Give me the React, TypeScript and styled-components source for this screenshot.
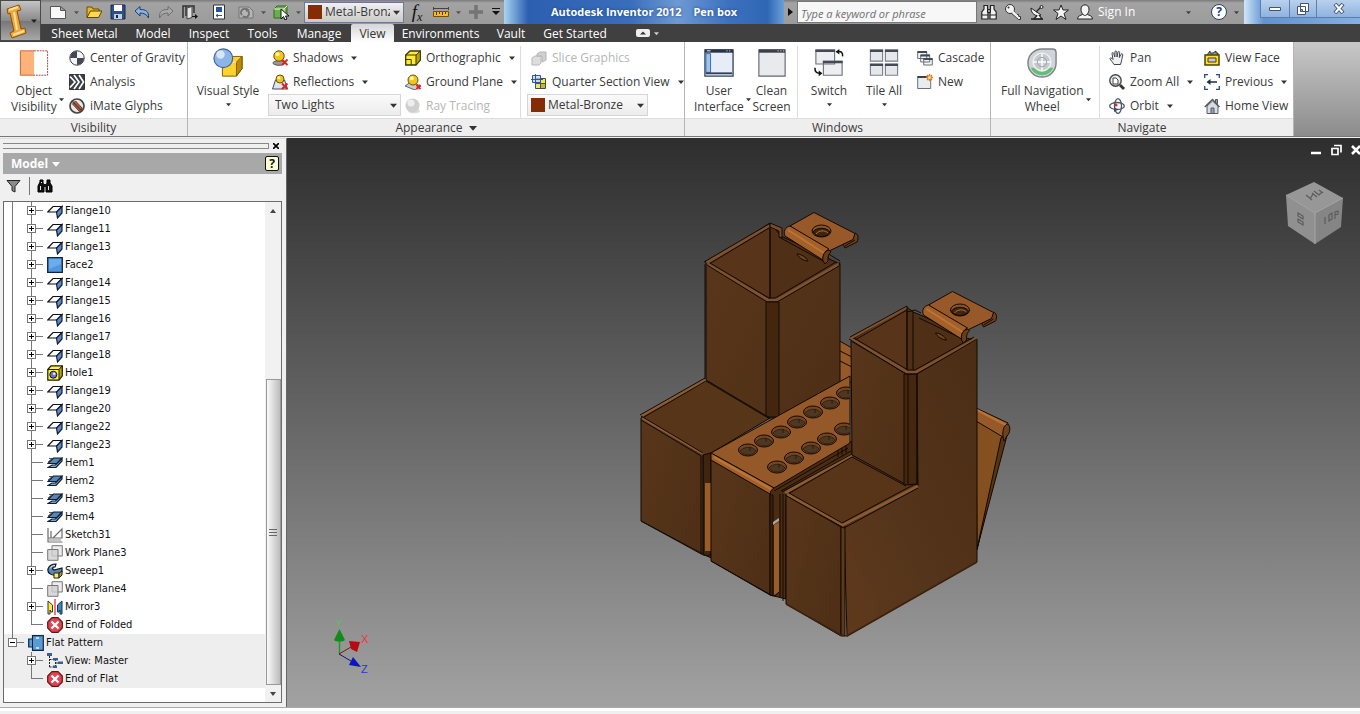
import React from "react";
import styled, { createGlobalStyle, css } from "styled-components";

const ui = `"Open Sans", "Noto Sans", sans-serif`;
const treeFont = `"DejaVu Sans Condensed", "Noto Sans", sans-serif`;

const GlobalStyle = createGlobalStyle`
  * { box-sizing: border-box; }
  body { margin: 0; background: #f0f0f0; }
  button, select, input { font: inherit; color: inherit; border: 0; padding: 0; margin: 0; background: none; }
  svg { display: block; flex: none; }
`;

const Page = styled.div`
  display: flex;
  flex-direction: column;
  min-height: 100vh;
  font-family: ${ui};
  font-size: 12px;
  line-height: 16px;
  color: #3a3a3a;
  overflow: hidden;
`;

/* ---------- icons ---------- */

const glyphs: Record<string, React.ReactNode> = {
  page: <path d="M.5 2.500h10l5 4v8H.5z M10.500 2.500v4h5" fill="#f8f8f8" stroke="#555" />,
  folder: (
    <>
      <path d="M1 13V3h5l1 2h6v3" fill="#e8b820" stroke="#6a4a00" />
      <path d="M1 13.500 4.500 7H16l-3.500 6.500z" fill="#ffd94a" stroke="#5d4300" />
    </>
  ),
  save: (
    <>
      <path d="M1 1h14v14H1z" fill="#2d4f8f" stroke="#14284d" />
      <path d="M4 1h8v6H4z" fill="#fff" />
      <path d="M4 10h8v5H4z" fill="#c3cde0" />
      <path d="M6 11h2v3H6z" fill="#14284d" />
    </>
  ),
  undo: <path d="M1 7 6 2.500v3c6 0 9 2 8.500 8.500C13 10.500 10 9 6 9v3z" fill="#8db4e2" stroke="#1f3f70" />,
  redo: <path d="M15 7 10 2.500v3C4 5.500 1 7.500 1.500 14 3 10.500 6 9 10 9v3z" fill="#a9a9a9" stroke="#6e6e6e" />,
  exit: (
    <>
      <path d="M1 14V2h11v7M4 2v10" fill="none" stroke="#333" strokeWidth="1.500" />
      <path d="M5 4l5-1.500v11L5 15z" fill="#e4e4e4" stroke="#444" />
      <path d="M10 12.500h4" stroke="#111" />
      <path d="M13 10l3 2.500-3 2.500z" fill="#111" />
    </>
  ),
  doc: (
    <>
      <path d="M2.500 1h11v14h-11z" fill="#fff" stroke="#333" />
      <path d="M5 3h6v5H5z" fill="#25569c" />
      <path d="M5 11.500h6M5 11.500l2-1.500M5 11.500l2 1.500" stroke="#25569c" fill="none" />
    </>
  ),
  sync: (
    <>
      <path d="M1 3h10l4 4v7H1z" fill="#b5b5b5" stroke="#767676" />
      <path d="M4 11a3.500 3.500 0 0 1 5-5M10 7a3.500 3.500 0 0 1-5 5" fill="none" stroke="#707070" strokeWidth="1.800" />
      <path d="M8 3.500l4 2.500-4 2z" fill="#707070" />
    </>
  ),
  pick: (
    <>
      <path d="M1 5l3-3h10v9l-3 3H1z" fill="#67b04a" stroke="#2e6b1d" />
      <path d="M1 5h10v9M11 5l3-3" fill="none" stroke="#e6f7df" />
      <path d="M8 5v10l2.500-2.500L12 16l2-1-1.500-3H16z" fill="#fff" stroke="#111" />
    </>
  ),
  ruler: (
    <>
      <path d="M.5 7.500h15v5H.5z" fill="#f4b92c" stroke="#7a4d00" />
      <path d="M3.500 8v3M6.500 8v2M9.500 8v3M12.500 8v2" stroke="#5b3900" />
      <path d="M0 4.500h16M.5 3v3M15.500 3v3" stroke="#444" />
    </>
  ),
  plus: <path d="M8 1v14M1 8h14" stroke="#747474" strokeWidth="3.500" />,
  binoc: (
    <>
      <path d="M3 1.500h3.500V5l.5 2v8H.8V8L3 5zM9.500 1.500H13V5l2.200 3v7H9V7l.5-2z" fill="#f2f2f2" stroke="#222" strokeWidth="1.200" />
      <path d="M6.500 5.500h3v3h-3z" fill="#999" stroke="#222" />
      <path d="M1 11h6M9 11h6" stroke="#222" />
    </>
  ),
  binocDark: (
    <>
      <path d="M3 2h3v3l1 2v7H1V8l2-4zM10 2h3v3l2 3v6H9V7l1-2z" fill="#111" stroke="#000" />
      <path d="M6.500 6h3v3h-3z" fill="#111" />
      <path d="M3.500 8v4M11.500 8v4M4.500 4v1" stroke="#e8e8e8" />
    </>
  ),
  key: (
    <>
      <path d="M5 8l8.500 7.500H15.500v-3h-2v-2h-2L8 6z" fill="#f2f2f2" stroke="#333" />
      <circle cx="5" cy="5" r="4.500" fill="#f2f2f2" stroke="#333" />
      <path d="M6 6l7 7" stroke="#f2f2f2" strokeWidth="2" />
      <circle cx="3.500" cy="3.500" r="1" fill="#333" />
    </>
  ),
  dish: (
    <>
      <path d="M2 4c0 6 5 9 10 7L2 4z" fill="#f4f4f4" stroke="#222" />
      <path d="M7 8l6-6M8 11.500L5 15h8l-3-4" fill="#f4f4f4" stroke="#222" strokeWidth="1.200" />
      <path d="M2 15h12" stroke="#222" strokeWidth="1.500" />
      <circle cx="12.500" cy="3" r="1.500" fill="#eee" stroke="#222" />
    </>
  ),
  star: <path d="M8 1l2 5h5.500L11 9.500l2 6L8 12l-5 3.500 2-6L.5 6H6z" fill="#f4f4f4" stroke="#222" />,
  user: (
    <>
      <path d="M.5 15c0-3 3-3.500 5-4.500h5c2 1 5 1.500 5 4.500z" fill="#f4f4f4" stroke="#222" />
      <path d="M4 5c0-5.500 8-5.500 8 0 0 4-2.500 6.500-4 6.500S4 9 4 5z" fill="#f4f4f4" stroke="#222" />
    </>
  ),
  gravity: (
    <>
      <circle cx="8" cy="8" r="7.200" fill="#f4f4f4" stroke="#444" />
      <path d="M8 8V1A7 7 0 0 0 1 8zM8 8v7a7 7 0 0 0 7-7z" fill="#444a55" />
    </>
  ),
  analysis: (
    <>
      <path d="M.5.500h15v15H.5z" fill="#3b3f46" stroke="#333" />
      <path d="M1 2.500l5 5.500-5 5.500M5 1l5 7-5 7M10 1l4.500 7L10 15" fill="none" stroke="#fff" strokeWidth="1.700" />
    </>
  ),
  imate: (
    <>
      <circle cx="8" cy="8" r="7" fill="#e8e8e8" stroke="#444" strokeWidth="1.700" />
      <path d="M3.500 6l3-3 6.500 7-.5 3.500-2.500-.5z" fill="#c2603f" stroke="#7a2c14" />
      <path d="M3 3l10 10" stroke="#444" strokeWidth="1.200" />
    </>
  ),
  shadows: (
    <>
      <ellipse cx="7" cy="13" rx="6" ry="2.300" fill="#999" stroke="#555" />
      <circle cx="7" cy="6" r="5.200" fill="#f2c51c" stroke="#6d5300" />
      <circle cx="5.500" cy="4.300" r="2" fill="#fff6b0" />
      <path d="M10 9.500l5.500 5.500M15.500 9.500L10 15" stroke="#d22" strokeWidth="1.900" />
    </>
  ),
  reflections: (
    <>
      <path d="M3.500 6h9l3 9H.5z" fill="#dfe3ea" stroke="#444b57" />
      <circle cx="8" cy="5" r="4" fill="#f2c51c" stroke="#6d5300" />
      <circle cx="6.800" cy="3.700" r="1.500" fill="#fff6b0" />
      <path d="M10 9.500l5.500 5.500M15.500 9.500L10 15" stroke="#d22" strokeWidth="1.900" />
    </>
  ),
  ortho: (
    <>
      <path d="M.7 5 5 1h10.300v9L11 15H.7z" fill="#ffe93a" stroke="#3d3700" strokeWidth="1.300" />
      <path d="M11 15V5l4.300-4v9z" fill="#b9a400" stroke="#3d3700" />
      <path d="M.7 5H11M.7 9.500h5.500V15" fill="none" stroke="#3d3700" />
    </>
  ),
  ground: (
    <>
      <path d="M0 12l6-4 10 4-6 4z" fill="#c9cdd4" stroke="#666" />
      <circle cx="8" cy="6" r="5" fill="#f2c51c" stroke="#6d5300" />
      <circle cx="6.800" cy="4.300" r="2" fill="#fff6b0" />
      <path d="M11.500 11l4 4M15.500 11l-4 4" stroke="#d22" strokeWidth="1.900" />
    </>
  ),
  ray: (
    <>
      <ellipse cx="9" cy="13" rx="6" ry="2.300" fill="#ddd" />
      <circle cx="7.500" cy="7.500" r="7" fill="#cfcfcf" />
      <circle cx="6" cy="5" r="3.500" fill="#eee" />
    </>
  ),
  slice: (
    <>
      <path d="M1 8l3-2h6v7l-2 2H1z" fill="#ddd" stroke="#b8b8b8" />
      <path d="M6 4l3-2h6v8l-4 2V6H6z" fill="#d0d0d0" stroke="#b3b3b3" />
    </>
  ),
  quarter: (
    <>
      <path d="M4.500 4.500h10v10h-10z" fill="#ffe452" stroke="#4a4a4a" />
      <path d="M1.500 1.500h8v7h-8z" fill="#bcd4f5" fillOpacity="0.700" stroke="#2456b8" />
      <path d="M4.500 0v13M0 5.500h12M9.500 2v12M4 9.500h11" fill="none" stroke="#2456b8" />
      <path d="M10 10h4v4h-4z" fill="#cbb62a" />
    </>
  ),
  cascade: (
    <>
      <path d="M.7 1.500h9v7h-9zM3.700 5h9v7h-9zM6.700 8.500h8.600v6.500H6.700z" fill="#f2f4f7" stroke="#6b707a" />
      <path d="M.5 2h9.500M3.500 5.500H13M6.500 9h9" stroke="#444a54" strokeWidth="1.800" />
    </>
  ),
  newWin: (
    <>
      <path d="M.7 2.500h13v12H.7z" fill="#e9ecf0" stroke="#6b707a" />
      <path d="M.5 3h9" stroke="#3c424c" strokeWidth="2" />
      <path d="M12.500 0v7M9 3.500h7M10 1l5 5M15 1l-5 5" stroke="#f07416" strokeWidth="1.300" />
      <circle cx="12.500" cy="3.500" r="1.500" fill="#ffe9a0" />
    </>
  ),
  pan: (
    <path
      d="M5 14.500C3.500 12 2 10.500.8 8.500c.7-1 2-.5 3.200 1L3 3.500c0-1.200 1.500-1.200 1.800 0L5.800 7 6 1.800c.1-1.200 1.700-1.200 1.800 0L8 7l1-4.800c.3-1.100 1.700-.9 1.700.3L10.300 7.500l1.800-3.300c.6-1 1.900-.4 1.600.8-.6 2.500-1 6-2.200 9.500z"
      fill="#f1f1f1" stroke="#3f444d"
    />
  ),
  zoom: (
    <>
      <circle cx="6.500" cy="6.500" r="5.700" fill="#e9edf2" stroke="#444" strokeWidth="1.400" />
      <path d="M4 4h3l2 2v4H4z" fill="#fff" stroke="#444" />
      <path d="M11 11l4 4" stroke="#333" strokeWidth="2.800" />
    </>
  ),
  orbit: (
    <>
      <ellipse cx="8" cy="8" rx="7.300" ry="3.500" fill="none" stroke="#4d5766" strokeWidth="1.300" />
      <ellipse cx="9" cy="8" rx="3.500" ry="7.300" fill="none" stroke="#4d5766" strokeWidth="1.300" />
      <path d="M7 5.500v3M5.500 7h3" stroke="#c22" strokeWidth="1.300" />
      <path d="M5 9l4 2.500L5 14z" fill="#444c5a" />
    </>
  ),
  face: (
    <>
      <path d="M3 5l3-4v2h3l3-2v2h2v3" fill="#8f97a3" stroke="#333" />
      <path d="M1 5h14v10H1z" fill="#ffe12c" stroke="#4d4300" strokeWidth="1.500" />
      <path d="M4 8h8v4H4z" fill="#c9c5ea" stroke="#4d4300" />
    </>
  ),
  previous: (
    <>
      <path d="M.7 4V.7H4M12 .7h3.300V4M15.300 12v3.300H12M4 15.300H.7V12" fill="none" stroke="#2b4a7c" strokeWidth="1.300" />
      <path d="M4 8h9" stroke="#1c2b44" strokeWidth="1.500" />
      <path d="M2.500 8l4-3v6z" fill="#1c2b44" />
    </>
  ),
  home: (
    <>
      <path d="M11.500 1.500h2v4h-2z" fill="#999" stroke="#555" />
      <path d="M3 8l5.500-5L14 8v7.500H3z" fill="#d9dbe3" stroke="#555b66" />
      <path d="M.7 9 8.500 1.500 15.500 9" fill="none" stroke="#555b66" strokeWidth="1.500" />
      <path d="M7 10h3v5.500H7z" fill="#9aa0ad" stroke="#555b66" />
    </>
  ),
  flange: (
    <>
      <path d="M.8 9 6 3.500h9L10 9z" fill="#fff" stroke="#111" strokeWidth="1.200" />
      <path d="M9.500 9 15 3.500V10l-4.500 5z" fill="#5b8ac6" stroke="#111c33" strokeWidth="1.200" />
    </>
  ),
  faceSq: (
    <>
      <path d="M.7.700h14.600v14.600H.7z" fill="#4f97df" stroke="#0f2340" strokeWidth="1.300" />
      <path d="M2 2h12v5L2 12z" fill="#6badeb" />
    </>
  ),
  hole: (
    <>
      <path d="M.8 4.500 4 .8h11.200v10L12 15.200H.8z" fill="#ffef4a" stroke="#1c1a00" strokeWidth="1.200" />
      <path d="M12 15V4.500L15.200.8v10z" fill="#b7a500" stroke="#1c1a00" />
      <path d="M.8 4.500H12" stroke="#1c1a00" />
      <circle cx="6.300" cy="9.700" r="3.500" fill="#6f76c9" stroke="#111" />
      <circle cx="7.200" cy="8.800" r="1.300" fill="#e6e8ff" />
    </>
  ),
  hem: (
    <>
      <path d="M1 8.500 6.500 3H15l-5 5.500z" fill="#5787b4" stroke="#0d1d33" strokeWidth="1.200" />
      <path d="M2 3.500h4M1 7l4-3.500" stroke="#333" strokeWidth="0.800" />
      <path d="M1 12.500 5 10h3.500l6.500-6.500V6l-6 6.500z" fill="#7fa9d0" stroke="#0d1d33" strokeWidth="1.200" />
    </>
  ),
  sketch: (
    <>
      <path d="M1 1v14h14.500M1 11h14V2L6 11M4 4v7" fill="none" stroke="#6b6b6b" strokeWidth="1.200" />
      <path d="M2 12h12v2.500H2z" fill="#c5c5c5" />
    </>
  ),
  plane: (
    <>
      <path d="M5 .7h10.300V11H5z" fill="#ececec" stroke="#777" />
      <path d="M.7 4.500H11v10.800H.7z" fill="#cfcfcf" fillOpacity="0.800" stroke="#777" />
    </>
  ),
  sweep: (
    <>
      <path d="M1 6c1-3 4-5 8-5l-1 3c-3 0-3 2-1 3l8-2v4l-6 3C5 13 0 10 1 6z" fill="#5d87b0" stroke="#0c1524" strokeWidth="1.200" />
      <path d="M3 5.500c1-2 3-3 5-3" fill="none" stroke="#e8f1fa" />
      <path d="M7 10h5v5H7z" fill="#fff05a" stroke="#222" />
      <path d="M12 10l3-2v4l-3 3z" fill="#ac9c20" stroke="#222" />
    </>
  ),
  mirror: (
    <>
      <path d="M1 2l4.500 4v7H4L3 11v4H1z" fill="#ffe93a" stroke="#333" />
      <path d="M15 2l-4.500 4v7H12l1-2v4h2z" fill="#3f86bd" stroke="#13304a" />
      <path d="M8 0v16" stroke="#d22" strokeWidth="1.200" />
    </>
  ),
  end: (
    <>
      <path d="M5 .7h6L15.300 5v6L11 15.300H5L.7 11V5z" fill="#e0444e" stroke="#6d0f16" strokeWidth="1.200" />
      <path d="M4.500 4.500l7 7M11.500 4.500l-7 7" stroke="#fff" strokeWidth="2.300" />
    </>
  ),
  flat: (
    <>
      <path d="M4.500.7H15.300v14.600H4.500V12H.7V4h3.800z" fill="#5b9bd3" stroke="#0d2748" strokeWidth="1.200" />
      <path d="M4.500 4v8" stroke="#0d2748" />
      <path d="M8 3h3M8 13h3" stroke="#e5f2ff" strokeWidth="1.400" />
    </>
  ),
  views: (
    <>
      <path d="M2.500 3v11M2.500 14H6M2.500 6.500H6M8.500 6v8M9 10h3" fill="none" stroke="#222" strokeDasharray="2 1" />
      <path d="M0 0h5v3H0zM6 5h5v2.500H6zM11 8.500h5V11h-5zM6 12.500h4V15H6z" fill="#345f9f" />
    </>
  ),
  filter: <path d="M1 2.500h13L9 8.500V14l-3-1.500v-4z" fill="#8a8a8a" stroke="#222" />,
};

const Icon = ({ name, size = 16 }: { name: string; size?: number }) => (
  <svg width={size} height={size} viewBox="0 0 16 16" aria-hidden="true">{glyphs[name]}</svg>
);

const largeGlyphs: Record<string, React.ReactNode> = {
  objVis: (
    <>
      <path d="M1 3h15v26H1z" fill="#ffb27a" />
      <path d="M16 3h14.500v26H16" fill="#fff" stroke="#9a3d2a" strokeDasharray="2 1" />
      <path d="M16 3H1.500v26H16" fill="none" stroke="#c7652f" />
    </>
  ),
  visual: (
    <>
      <path d="M10 15l6-6h15v13l-6 8H10z" fill="#ffd22e" stroke="#7a5a00" />
      <path d="M25 30V15l6-6v13z" fill="#b98a00" stroke="#7a5a00" />
      <path d="M10 15h15" stroke="#fff3a8" />
      <circle cx="11" cy="11" r="10" fill="#8db6e8" stroke="#44638f" strokeWidth="1.300" />
      <circle cx="8" cy="7" r="4.500" fill="#d6e7fb" />
    </>
  ),
  userUi: (
    <>
      <path d="M1 2h30v28H1z" fill="#e6edf6" stroke="#31415c" strokeWidth="1.400" />
      <path d="M1 1.500h30V5H1z" fill="#26334a" />
      <path d="M2 6h5v20H2z" fill="#9cc4ef" stroke="#3a669c" />
      <path d="M2 27h28" stroke="#31415c" strokeWidth="2" />
      <path d="M3 3h4M24 3h1M27 3h1" stroke="#fff" />
    </>
  ),
  clean: (
    <>
      <path d="M2 2h28v28H2z" fill="#e8eaee" stroke="#60656f" strokeWidth="1.200" />
      <path d="M2 1.500h28V5H2z" fill="#3a3f4a" />
      <path d="M22 3h1M25 3h1M28 3h1" stroke="#fff" />
    </>
  ),
  switch: (
    <>
      <path d="M2 2h20v15H2zM10 14h20v15H10z" fill="#eceef2" stroke="#6b707a" strokeWidth="1.200" />
      <path d="M1.500 3h21M9.500 15h21" stroke="#444a54" strokeWidth="2.500" />
      <path d="M25 4c4-1 6 1 5.500 5M6 27c-4 0-5-2-5-6" fill="none" stroke="#111" strokeWidth="1.600" />
      <path d="M27 1v6l-4-3zM5 24v6l4-3z" fill="#111" />
    </>
  ),
  tile: (
    <>
      <path d="M1.500 2h13v12h-13zM17.500 2h13v12h-13zM1.500 17h13v12h-13zM17.500 17h13v12h-13z" fill="#e4e7ec" stroke="#7b8089" strokeWidth="1.200" />
      <path d="M1 3h14M17 3h14M1 18h14M17 18h14" stroke="#444a54" strokeWidth="2.500" />
    </>
  ),
  wheel: (
    <>
      <path d="M16 1h11c3 0 4 1 4 4v11a15 15 0 1 1-15-15z" fill="#d0d3d7" stroke="#7b8087" strokeWidth="1.500" />
      <path d="M4 21a13 13 0 0 0 24 0z" fill="#5fbf73" />
      <circle cx="16" cy="15" r="9.500" fill="#c6c9ce" stroke="#f1f1f1" strokeWidth="1.500" />
      <path d="M16 6v18M7 15h18" stroke="#fff" strokeWidth="1.500" />
      <circle cx="16" cy="15" r="5" fill="none" stroke="#9ba0a8" />
    </>
  ),
};

const Caret = ({ size = 6, color = "#333" }: { size?: number; color?: string }) => (
  <svg width={size} height={size} viewBox="0 0 6 6" aria-hidden="true"><path d="M0 1.500h6L3 5z" fill={color} /></svg>
);

/* ---------- title bar and tabs ---------- */

const Header = styled.header`
  display: grid;
  grid-template: 24px 18px / 41px 1fr;
  background: #404040;
`;

const AppButton = styled.button`
  grid-row: 1 / 3;
  display: flex;
  align-items: center;
  justify-content: flex-end;
  gap: 1px;
  padding-right: 3px;
  margin: 0 0 1px;
  border: 1px solid #4a4a4a;
  background: linear-gradient(#c4c4c4, #8a8a8a 50%, #777 52%, #a8a8a8);
`;

const TitleBar = styled.div`
  display: flex;
  background: linear-gradient(#7b7b7b, #a3a3a3 3px, #9b9b9b);
`;

const QuickBar = styled.div`
  display: flex;
  align-items: center;
  padding-left: 5px;
`;

const ToolButton = styled.button<{ $w: number }>`
  width: ${(p) => p.$w}px;
  height: 24px;
  display: flex;
  align-items: center;
  justify-content: center;
`;

const Formula = styled.span`
  font: italic 400 19px/20px "Liberation Serif", serif;
  color: #111;
  sub { font-size: 12px; vertical-align: -3px; line-height: 1; }
`;

const Picker = styled.label<{ $w: number; $top?: boolean; $plain?: boolean }>`
  width: ${(p) => p.$w}px;
  height: ${(p) => (p.$top ? 21 : 22)}px;
  display: flex;
  align-items: center;
  gap: 3px;
  padding: 0 3px 0 ${(p) => (p.$plain ? 6 : 3)}px;
  border: 1px solid ${(p) => (p.$top ? "#6b7a90" : "#d5d5d5")};
  background: ${(p) => (p.$top ? "linear-gradient(#f0f0f0, #c9c9c9)" : "linear-gradient(#fafafa, #ececec)")};
  select {
    appearance: none;
    flex: 1;
    min-width: 0;
    height: 18px;
    overflow: hidden;
    text-overflow: clip;
    outline: 0;
  }
`;

const Swatch = styled.span`
  width: 14px;
  height: 14px;
  flex: none;
  background: #842c04;
`;

const TitleText = styled.h1`
  width: 280px;
  margin: 0;
  display: flex;
  justify-content: center;
  gap: 12px;
  font-size: 11px;
  line-height: 24px;
  font-weight: 700;
  color: #fff;
  background: linear-gradient(90deg, #a8d4f4, #2c5fb0 24px, #3a6dbb 45%, #6d9ad4 62%, #3d71bf 80%, #2f66b4 94%, #6b9fd8);
  text-shadow: 0 0 3px #1d3f7c;
`;

const Search = styled.input`
  width: 180px;
  height: 22px;
  margin-top: 1px;
  padding: 2px 3px 0;
  align-self: flex-start;
  border: 1px solid #777;
  background: #f7f7f7;
  font-style: italic;
  font-size: 11px;
  &::placeholder { color: #6f6f6f; opacity: 1; }
`;

const Account = styled.div`
  flex: 1;
  display: flex;
  align-items: center;
`;

const SignIn = styled.button`
  display: flex;
  align-items: center;
  justify-content: space-between;
  width: 94px;
  padding-left: 1px;
  margin-right: 16px;
  color: #fff;
  text-align: left;
`;

const HelpMark = styled.span`
  width: 16px;
  height: 16px;
  border-radius: 50%;
  border: 1px solid #2c3e66;
  background: #fff;
  font-weight: 700;
  line-height: 14px;
  text-align: center;
  color: #1c3f86;
`;

const WindowButtons = styled.div`
  display: flex;
  justify-content: flex-end;
  width: 116px;
  background: linear-gradient(90deg, #cfe6f9, #5f93d2 20px, #86b0e2);
`;

const WindowButton = styled.button<{ $w: number }>`
  width: ${(p) => p.$w}px;
  height: 18px;
  display: flex;
  align-items: center;
  justify-content: center;
  border: solid #5e7fae;
  border-width: 0 0 1px 1px;
  background: linear-gradient(#b9d1ee, #8fb2de);
`;

const Tabs = styled.nav`
  display: flex;
  padding-left: 2px;
  color: #fff;
  font-weight: 500;
`;

const Tab = styled.button<{ $w: number; $active?: boolean }>`
  width: ${(p) => p.$w}px;
  height: 18px;
  padding-top: 1px;
  text-align: center;
  white-space: nowrap;
  ${(p) => p.$active && css`
    color: #333;
    background: linear-gradient(#d5d5d5, #fff);
    border-radius: 2px 2px 0 0;
  `}
`;

const RibbonToggle = styled.button`
  display: flex;
  align-items: center;
  gap: 4px;
  margin-left: 21px;
`;

/* ---------- ribbon ---------- */

const Ribbon = styled.div`
  display: flex;
  height: 95px;
  background: linear-gradient(#c8c8c8, #8c8c8c);
  border-bottom: 1px solid #777;
`;

const Panel = styled.section`
  display: flex;
  flex-direction: column;
  background: #fff;
  border-right: 1px solid #b5b5b5;
`;

const PanelBody = styled.div`
  display: flex;
  flex: 1;
  padding-top: 4px;
`;

const PanelTitle = styled.h2`
  display: flex;
  align-items: center;
  justify-content: center;
  gap: 6px;
  margin: 0;
  height: 18px;
  font-size: 12px;
  font-weight: 400;
  border-top: 1px solid #ddd;
  background: #eee;
`;

const Column = styled.div<{ $w: number; $inset?: number }>`
  width: ${(p) => p.$w}px;
  flex: none;
  display: flex;
  flex-direction: column;
  align-items: flex-start;
  padding-left: ${(p) => p.$inset ?? 0}px;
  ${Picker} { margin-left: -${(p) => p.$inset ?? 0}px; }
`;

const Rule = styled.span<{ $gap: number }>`
  width: 1px;
  flex: none;
  margin-right: ${(p) => p.$gap}px;
  background: #ddd;
`;

const SmallButton = styled.button`
  display: flex;
  align-items: center;
  gap: 5px;
  height: 24px;
  white-space: nowrap;
  &:disabled { color: #b5b5b5; }
  svg + span + svg { margin-left: 3px; }
`;

const LargeButton = styled.button<{ $w: number; $side?: boolean }>`
  width: ${(p) => p.$w}px;
  flex: none;
  display: grid;
  grid-template-columns: ${(p) => (p.$side ? "1fr 10px" : "1fr")};
  grid-template-rows: 34px auto auto;
  align-content: start;
  justify-items: center;
  align-items: center;
  white-space: pre;
  row-gap: 3px;
  > svg:first-child { grid-column: 1; }
  > span { grid-column: 1; }
  > svg:last-child { ${(p) => (p.$side ? "grid-column: 2; grid-row: 2;" : "grid-column: 1;")} }
`;

const Small = ({ icon, label, caret, disabled }: { icon: string; label: string; caret?: boolean; disabled?: boolean }) => (
  <SmallButton disabled={disabled}>
    <Icon name={icon} />
    <span>{label}</span>
    {caret && <Caret />}
  </SmallButton>
);

const Large = ({ icon, label, w, side, caret }: { icon: string; label: string; w: number; side?: boolean; caret?: boolean }) => (
  <LargeButton $w={w} $side={side}>
    <svg width="30" height="30" viewBox="0 0 32 32" aria-hidden="true">{largeGlyphs[icon]}</svg>
    <span>{label}</span>
    {(side || caret) && <Caret size={5} />}
  </LargeButton>
);

const Gap = styled.span<{ $w: number }>`
  width: ${(p) => p.$w}px;
  flex: none;
`;

/* ---------- browser panel ---------- */

const Workspace = styled.main`
  flex: 1;
  display: grid;
  grid-template-columns: 287px 1fr;
  margin-top: 1px;
`;

const Browser = styled.aside`
  display: flex;
  flex-direction: column;
  padding: 0 4px 4px 3px;
  background: #f0f0f0;
  border-right: 1px solid #666;
  border-top: 1px solid #ddd;
`;

const Grip = styled.div`
  display: flex;
  align-items: center;
  justify-content: space-between;
  height: 14px;
  padding-right: 3px;
  &::before {
    content: "";
    width: 265px;
    height: 4px;
    border: solid #888;
    border-width: 1px 1px 1px 0;
  }
`;

const BrowserTitle = styled.div`
  display: flex;
  align-items: center;
  justify-content: space-between;
  height: 21px;
  padding: 0 3px 0 8px;
  background: #a8a8a8;
  color: #fff;
  font-weight: 700;
  button { display: flex; align-items: center; gap: 4px; }
`;

const HelpNote = styled.button`
  width: 14px;
  height: 15px;
  justify-content: center;
  border: 1px solid #111;
  border-radius: 2px;
  background: #ffffd8;
  color: #111;
  font-size: 12px;
  line-height: 12px;
`;

const BrowserTools = styled.div`
  display: flex;
  align-items: center;
  height: 27px;
  padding: 0 3px 4px;
  gap: 7px;
`;

const ToolRule = styled.span`
  width: 1px;
  height: 18px;
  background: #777;
`;

const TreeBox = styled.div`
  flex: 1;
  display: grid;
  grid-template-columns: 1fr 16px;
  border: 1px solid #6c6c6c;
  background: #fff;
`;

const Tree = styled.ul`
  margin: 0;
  padding: 0;
  list-style: none;
  font-family: ${treeFont};
  font-size: 11px;
  color: #111;
`;

const Row = styled.li<{ $shade?: boolean }>`
  display: flex;
  align-items: center;
  height: 18px;
  line-height: 18px;
  white-space: nowrap;
  background: ${(p) => (p.$shade ? "#eee" : "none")};
  > span:last-child { padding-left: 2px; }
`;

const Rail = styled.span<{ $line: boolean }>`
  width: 19px;
  height: 18px;
  background: ${(p) => (p.$line ? "linear-gradient(#777, #777) 8px 0 / 1px 18px no-repeat" : "none")};
`;

const Branch = styled.span<{ $last?: boolean }>`
  width: 24px;
  height: 18px;
  padding: 4px 0 0 4px;
  background:
    linear-gradient(#777, #777) 8px 0 / 1px ${(p) => (p.$last ? 9 : 18)}px no-repeat,
    linear-gradient(#777, #777) 8px 8px / 12px 1px no-repeat;
`;

const Toggle = styled.button<{ $open?: boolean }>`
  display: block;
  width: 9px;
  height: 9px;
  border: 1px solid #777;
  background:
    linear-gradient(#000, #000) center / 5px 1px no-repeat,
    linear-gradient(#000, #000) center / 1px ${(p) => (p.$open ? 1 : 5)}px no-repeat,
    #fff;
`;

const ScrollTrack = styled.div`
  display: grid;
  grid-template-rows: 18px 159fr 306fr 17px;
  justify-items: center;
  align-items: center;
  background: #f1f1f1;
  > svg:last-child { grid-row: 4; }
`;

const ScrollThumb = styled.div`
  grid-row: 3;
  width: 15px;
  height: 100%;
  display: flex;
  flex-direction: column;
  align-items: center;
  justify-content: center;
  border: 1px solid #999;
  background: linear-gradient(90deg, #fafafa, #d5d5d5 60%, #bdbdbd);
`;

const StatusBar = styled.footer`
  height: 7px;
  border-top: 1px solid #aaa;
  background: linear-gradient(#fff 3px, #f0f0f0 3px);
`;

type Node = [label: string, icon: string, expandable?: boolean];
const nodes: Node[] = [
  ["Flange10", "flange", true], ["Flange11", "flange", true], ["Flange13", "flange", true],
  ["Face2", "faceSq", true], ["Flange14", "flange", true], ["Flange15", "flange", true],
  ["Flange16", "flange", true], ["Flange17", "flange", true], ["Flange18", "flange", true],
  ["Hole1", "hole", true], ["Flange19", "flange", true], ["Flange20", "flange", true],
  ["Flange22", "flange", true], ["Flange23", "flange", true], ["Hem1", "hem"], ["Hem2", "hem"],
  ["Hem3", "hem"], ["Hem4", "hem"], ["Sketch31", "sketch"], ["Work Plane3", "plane"],
  ["Sweep1", "sweep", true], ["Work Plane4", "plane"], ["Mirror3", "mirror", true], ["End of Folded", "end"],
];
const flatNodes: Node[] = [["View: Master", "views", true], ["End of Flat", "end"]];

const TreeRow = ({ node, last, flat }: { node: Node; last: boolean; flat?: boolean }) => (
  <Row $shade={flat}>
    <Rail $line={!flat} />
    <Branch $last={last}>{node[2] && <Toggle aria-label={`Expand ${node[0]}`} />}</Branch>
    <Icon name={node[1]} />
    <span>{node[0]}</span>
  </Row>
);

/* ---------- 3D view ---------- */

const Viewport = styled.section`
  position: relative;
  background: linear-gradient(#2e2e2e, #646464 48%, #a2a2a2);
  overflow: hidden;
  min-width: 0;
`;

const Scene = styled.svg`
  width: 100%;
  height: 100%;
`;

const ViewButtons = styled.div`
  position: absolute;
  top: 5px;
  right: -3px;
  display: flex;
  gap: 6px;
`;

const ViewButton = styled.button`
  width: 14px;
  height: 14px;
  svg { margin: 0 auto; }
`;

const CubeArt = styled.svg`
  position: absolute;
  top: 40px;
  right: 14px;
`;

const TriadArt = styled.svg`
  position: absolute;
  left: 43px;
  bottom: 28px;
`;

const upperHoles = [[748, 450], [764, 441], [781, 432], [797, 422], [813, 412], [830, 403], [846, 393]];
const lowerHoles = [[777, 467], [794, 458], [811, 448], [827, 439], [844, 429]];

const Hook = ({ dx = 0, dy = 0 }: { dx?: number; dy?: number }) => (
  <g transform={`translate(${dx} ${dy})`}>
    <path d="M843 244l9-4 3-7c3 1 4 5 2 9l-12 6z" fill="#6b3e18" />
    <path d="M845 246l10-6" fill="none" />
    <path d="M790 226l24-13.500 41 21-2 6-25 12z" fill="#98592a" />
    <path d="M790 226c-5 1-7 6-5 10l38 24c0-6 2-9 6-11z" fill="#a46029" />
    <path d="M788 230l36 23" stroke="#b97538" strokeWidth="2" />
    <path d="M823 261c-1-6 2-10 6-11l2 2c-3 2-3 5-3 9l-3 3z" fill="#6a3d17" />
    <ellipse cx="821.500" cy="231" rx="9.500" ry="6" fill="#8a5226" />
    <path d="M813 232c3-5 14-5 17 0-3 6-14 6-17 0z" fill="#3f2612" />
    <path d="M816 234c3-4 9-4 12-1" stroke="#b06f36" fill="none" />
    <path d="M797 254c4 0 9 3 11 7-4 0-9-3-11-7z" fill="#6e4420" />
  </g>
);

const Model = () => (
  <Scene viewBox="287 138 1073 569" role="img" aria-label="Pen box model">
    <defs>
      <clipPath id="plateClip"><path d="M711 453 850 376v67l-76 44z" /></clipPath>
      <linearGradient id="side" x1="0" x2="1" y2="0.600">
        <stop offset="0" stopColor="#58361b" />
        <stop offset="1" stopColor="#4f3016" />
      </linearGradient>
      <linearGradient id="big" x1="1" x2="0" y1="0" y2="1">
        <stop offset="0" stopColor="#4b2d15" />
        <stop offset="0.600" stopColor="#54351b" />
        <stop offset="1" stopColor="#60391c" />
      </linearGradient>
    </defs>
    <g stroke="#120a04" strokeWidth="1" strokeLinejoin="round">
      <path d="M838 340l14 8v34l-14 2z" fill="#96592a" />
      <path d="M840 351l12 6M840 361l12 6" fill="none" />

      <path d="M976 420l27 14v5L977 550z" fill="#85501f" />
      <path d="M1001 438 1009 428 977 549z" fill="#58340f" />
      <path d="M976 408l32 15-5 14-27-16z" fill="#98592a" />
      <path d="M977 410l29 15" stroke="#b97538" strokeWidth="2" />
      <path d="M1003 437c-1-8 2-13 5-13 3 3 2 9-1 12l-3 5z" fill="#6f421b" />

      <path d="M706 263 770 223l11 13 42 20 17 8-68 39z" fill="#4f2f16" />
      <path d="M706 263 770 224v75z" fill="#58351a" />
      <path d="M706 263 770 225" stroke="#7d5130" strokeWidth="3" />
      <path d="M704 262 769 224M709 264l60-36M770 224v75" fill="none" />
      <path d="M770 223l12 5v10l-3-1v-6l-9-4z" fill="#7c4b23" />
      <path d="M779 237l44 24M827 253l13 8" fill="none" />
      <path d="M706 263l62 37h9l63-36v118l-61 36h-13l-60-38z" fill="url(#side)" />
      <path d="M706 263l62 37h9l62-36" stroke="#7d5130" strokeWidth="3" fill="none" />
      <path d="M705 261l2 4 60 37h10l62-36 1-4M710 263l59 35h6l61-36" fill="none" />
      <path d="M766 302h13v115h-13z" fill="#44260f" />
      <path d="M705 264v116" fill="none" />

      <path d="M641 417l65-37 64 38-59 35-8 3z" fill="#563519" />
      <path d="M641 416l65-36" stroke="#8a5a33" strokeWidth="3" />
      <path d="M640 415l65-37M644 417l62-36 64 38" fill="none" />
      <path d="M703 455l8-2v105l-8-4z" fill="#3f240e" />
      <path d="M705 483h6v68h-6z" fill="#9a5d2a" stroke="none" />
      <path d="M641 418l62 37v99l-62-33z" fill="url(#side)" />
      <path d="M642 418l61 36" stroke="#8a5a33" strokeWidth="2.500" />
      <path d="M641 416l62 37M641 420l60 36M701 456v98M641 521l62 34 5 1 4-3" fill="none" />

      <path d="M770 488l82-47v20l-66 38v100l-16-4z" fill="#4b2c12" />
      <path d="M774 491l74-43M781 491l70-40M838 450v7M842 448v7M846 446v7" fill="none" />
      <path d="M711 453 850 376v67l-76 45z" fill="#955829" />
      <g clipPath="url(#plateClip)">
        {[...upperHoles, ...lowerHoles].map(([x, y]) => (
          <g key={`${x}-${y}`}>
            <ellipse cx={x} cy={y} rx="9.500" ry="6" fill="#74451f" />
            <path d={`M${x - 8} ${y + 1}c4-5 13-5 16 0-3 5-13 5-16 0z`} fill="#4f3823" strokeWidth="0.500" />
            <path d={`M${x + 2} ${y - 3}v4`} strokeWidth="0.600" />
          </g>
        ))}
      </g>
      <path d="M711 453l63 35c-3 2-4 4-4 7l-59-34z" fill="#a15f2c" />
      <path d="M714 457l57 32" stroke="#b97538" strokeWidth="2.500" />
      <path d="M711 460l59 34v101l-59-34z" fill="url(#side)" />
      <path d="M770 495h3v101l-3-1z" fill="#3b210c" />
      <path d="M774 525l5-3v70l-5 3z" fill="#9a5d2a" stroke="none" />
      <path d="M773 522l6-4v3l-6 4z" fill="#aaa69f" stroke="none" />
      <path d="M711 561l60 34 4 1 4-4M780 494v103M783 494v107" fill="none" />

      <path d="M786 494l67-39 66 30-77 40z" fill="#583519" />
      <path d="M785 493l67-38" stroke="#8a5a33" strokeWidth="3" />
      <path d="M782 492l70-38M788 494l64-37 54 29" fill="none" />

      <path d="M851 340l56-33 6 5 12 5 40 21 12 2-65 35z" fill="#4f2f15" />
      <path d="M851 340l56-33v64z" fill="#58351a" />
      <path d="M851 338l56-31" stroke="#7d5130" strokeWidth="3" />
      <path d="M850 337l57-31M855 340l52-30M907 306v64M913 312v60" fill="none" />
      <path d="M907 312l8-2 6 3M919 318l46 22" fill="none" />
      <path d="M851 341l54 32h13v112l-13-1-53-29z" fill="url(#side)" />
      <path d="M904 374h13v110l-13 1z" fill="#45270f" />
      <path d="M908 374v110" />
      <path d="M917 373l60-34v223l-130 74-3-110 74-40z" fill="url(#big)" />
      <path d="M917 374v110" />
      <path d="M786 494l55 32v110l-55-32z" fill="url(#side)" />
      <path d="M841 526h4v110h-4z" fill="#5d3a1d" />
      <path d="M787 494l56 31 75-39" stroke="#8a5a33" strokeWidth="3" fill="none" />
      <path d="M785 495l56 32 3 1 74-40M789 493l53 30 71-38" fill="none" />
      <path d="M851 339l56 33h9l61-34" stroke="#7d5130" strokeWidth="3" fill="none" />
      <path d="M849 339l57 35h11l60-35M854 338l54 32h7l59-33" fill="none" />
      <path d="M786 604l55 31 6 1 130-74" stroke="#3d220d" strokeWidth="1.500" fill="none" />
      <Hook />
      <Hook dx={138.500} dy={79} />
    </g>
  </Scene>
);

export default function App() {
  return (
    <Page>
      <GlobalStyle />
      <Header>
        <AppButton aria-label="Application menu">
          <svg width="27" height="36" viewBox="0 0 27 36" aria-hidden="true">
            <path d="M4 6 16 2l2 5-4 1 4 18 4-1 1 5-14 5-2-5 4-2L7 10 5 11z" fill="#f0a63a" stroke="#8c5206" />
            <path d="M6 7l9-3M11 9l3 18M10 32l11-4" stroke="#ffe19a" strokeWidth="2" />
          </svg>
          <Caret color="#222" />
        </AppButton>
        <TitleBar>
          <QuickBar>
            <ToolButton $w={24} aria-label="New"><Icon name="page" /></ToolButton>
            <ToolButton $w={12} aria-label="New options"><Caret size={5} color="#555" /></ToolButton>
            <ToolButton $w={24} aria-label="Open"><Icon name="folder" /></ToolButton>
            <ToolButton $w={24} aria-label="Save"><Icon name="save" /></ToolButton>
            <ToolButton $w={24} aria-label="Undo"><Icon name="undo" /></ToolButton>
            <ToolButton $w={24} aria-label="Redo"><Icon name="redo" /></ToolButton>
            <ToolButton $w={24} aria-label="Return"><Icon name="exit" /></ToolButton>
            <ToolButton $w={34} aria-label="Home"><Icon name="doc" /></ToolButton>
            <ToolButton $w={20} aria-label="Update"><Icon name="sync" /></ToolButton>
            <ToolButton $w={14} aria-label="Update options"><Caret size={5} color="#555" /></ToolButton>
            <ToolButton $w={22} aria-label="Select"><Icon name="pick" /></ToolButton>
            <ToolButton $w={12} aria-label="Select options"><Caret size={5} color="#555" /></ToolButton>
            <Picker $w={100} $top>
              <Swatch />
              <select aria-label="Material"><option>Metal-Bronze</option></select>
              <Caret size={7} />
            </Picker>
            <ToolButton $w={26} aria-label="Parameters"><Formula>f<sub>x</sub></Formula></ToolButton>
            <ToolButton $w={22} aria-label="Measure"><Icon name="ruler" /></ToolButton>
            <ToolButton $w={12} aria-label="Measure options"><Caret size={5} color="#555" /></ToolButton>
            <ToolButton $w={24} aria-label="Add"><Icon name="plus" /></ToolButton>
            <ToolButton $w={16} aria-label="Customize">
              <svg width="8" height="8" viewBox="0 0 8 8"><path d="M0 0h8v1H0zM0 3h8L4 7z" fill="#111" /></svg>
            </ToolButton>
          </QuickBar>
          <TitleText><span>Autodesk Inventor 2012</span><span>Pen box</span></TitleText>
          <ToolButton $w={13} aria-label="Search options">
            <svg width="5" height="8" viewBox="0 0 5 8"><path d="M0 0v8l5-4z" fill="#111" /></svg>
          </ToolButton>
          <Search placeholder="Type a keyword or phrase" aria-label="Search" />
          <Account>
            <ToolButton $w={24} aria-label="Find"><Icon name="binoc" /></ToolButton>
            <ToolButton $w={24} aria-label="Subscription"><Icon name="key" /></ToolButton>
            <ToolButton $w={24} aria-label="Communication"><Icon name="dish" /></ToolButton>
            <ToolButton $w={24} aria-label="Favorites"><Icon name="star" /></ToolButton>
            <ToolButton $w={24} aria-label="Account"><Icon name="user" /></ToolButton>
            <SignIn>Sign In<Caret size={5} color="#444" /></SignIn>
            <ToolButton $w={24} aria-label="Help"><HelpMark>?</HelpMark></ToolButton>
            <ToolButton $w={11} aria-label="Help options"><Caret size={5} color="#444" /></ToolButton>
          </Account>
          <WindowButtons>
            <WindowButton $w={29} aria-label="Minimize">
              <svg width="12" height="6" viewBox="0 0 12 6"><path d="M.5 1.500h11v3H.5z" fill="#fff" stroke="#44566f" /></svg>
            </WindowButton>
            <WindowButton $w={27} aria-label="Restore">
              <svg width="12" height="12" viewBox="0 0 12 12">
                <path d="M3.500.500h8v8h-8zM.5 3.500h8v8h-8z" fill="#fff" stroke="#44566f" />
                <path d="M3.500 6.500h2v2h-2z" fill="#8fb2de" stroke="#44566f" />
              </svg>
            </WindowButton>
            <WindowButton $w={44} aria-label="Close">
              <svg width="12" height="11" viewBox="0 0 12 11">
                <path d="M2 1l8 9M10 1L2 10" stroke="#44566f" strokeWidth="4" />
                <path d="M2.500 1.500l7 8M9.500 1.500l-7 8" stroke="#fff" strokeWidth="2" />
              </svg>
            </WindowButton>
          </WindowButtons>
        </TitleBar>
        <Tabs>
          <Tab $w={83}>Sheet Metal</Tab>
          <Tab $w={54}>Model</Tab>
          <Tab $w={58}>Inspect</Tab>
          <Tab $w={49}>Tools</Tab>
          <Tab $w={64}>Manage</Tab>
          <Tab $w={43} $active>View</Tab>
          <Tab $w={93}>Environments</Tab>
          <Tab $w={48}>Vault</Tab>
          <Tab $w={80}>Get Started</Tab>
          <RibbonToggle aria-label="Minimize ribbon">
            <svg width="14" height="8" viewBox="0 0 14 8">
              <rect width="14" height="8" rx="2" fill="#eee" />
              <path d="M4 5.500h6L7 2.500z" fill="#333" />
            </svg>
            <Caret size={5} color="#ccc" />
          </RibbonToggle>
        </Tabs>
      </Header>

      <Ribbon>
        <Panel>
          <PanelBody>
            <Gap $w={11} />
            <Large icon="objVis" label={"Object\nVisibility"} w={54} side />
            <Gap $w={4} />
            <Column $w={118}>
              <Small icon="gravity" label="Center of Gravity" />
              <Small icon="analysis" label="Analysis" />
              <Small icon="imate" label="iMate Glyphs" />
            </Column>
          </PanelBody>
          <PanelTitle>Visibility</PanelTitle>
        </Panel>

        <Panel>
          <PanelBody>
            <Gap $w={4} />
            <Large icon="visual" label="Visual Style" w={72} caret />
            <Gap $w={4} />
            <Column $w={137} $inset={4}>
              <Small icon="shadows" label="Shadows" caret />
              <Small icon="reflections" label="Reflections" caret />
              <Picker $w={133} $plain>
                <select aria-label="Lighting"><option>Two Lights</option></select>
                <Caret size={7} />
              </Picker>
            </Column>
            <Column $w={115}>
              <Small icon="ortho" label="Orthographic" caret />
              <Small icon="ground" label="Ground Plane" caret />
              <Small icon="ray" label="Ray Tracing" disabled />
            </Column>
            <Rule $gap={6} />
            <Column $w={157} $inset={4}>
              <Small icon="slice" label="Slice Graphics" disabled />
              <Small icon="quarter" label="Quarter Section View" caret />
              <Picker $w={121}>
                <Swatch />
                <select aria-label="Appearance"><option>Metal-Bronze</option></select>
                <Caret size={7} />
              </Picker>
            </Column>
          </PanelBody>
          <PanelTitle>Appearance <Caret size={8} /></PanelTitle>
        </Panel>

        <Panel>
          <PanelBody>
            <Gap $w={9} />
            <Large icon="userUi" label={"User\nInterface"} w={58} side />
            <Large icon="clean" label={"Clean\nScreen"} w={39} />
            <Gap $w={6} />
            <Rule $gap={6} />
            <Large icon="switch" label="Switch" w={50} caret />
            <Gap $w={5} />
            <Large icon="tile" label="Tile All" w={50} caret />
            <Gap $w={8} />
            <Column $w={73}>
              <Small icon="cascade" label="Cascade" />
              <Small icon="newWin" label="New" />
            </Column>
          </PanelBody>
          <PanelTitle>Windows</PanelTitle>
        </Panel>

        <Panel>
          <PanelBody>
            <Gap $w={10} />
            <Large icon="wheel" label={"Full Navigation\nWheel"} w={92} side />
            <Gap $w={6} />
            <Rule $gap={9} />
            <Column $w={95}>
              <Small icon="pan" label="Pan" />
              <Small icon="zoom" label="Zoom All" caret />
              <Small icon="orbit" label="Orbit" caret />
            </Column>
            <Column $w={89}>
              <Small icon="face" label="View Face" />
              <Small icon="previous" label="Previous" caret />
              <Small icon="home" label="Home View" />
            </Column>
          </PanelBody>
          <PanelTitle>Navigate</PanelTitle>
        </Panel>
      </Ribbon>

      <Workspace>
        <Browser>
          <Grip>
            <button aria-label="Close panel">
              <svg width="6" height="6" viewBox="0 0 6 6"><path d="M0 0l6 6M6 0L0 6" stroke="#000" strokeWidth="1.600" /></svg>
            </button>
          </Grip>
          <BrowserTitle>
            <button>Model <Caret size={8} color="#fff" /></button>
            <HelpNote aria-label="Help">?</HelpNote>
          </BrowserTitle>
          <BrowserTools>
            <button aria-label="Filter"><Icon name="filter" /></button>
            <ToolRule />
            <button aria-label="Find"><Icon name="binocDark" /></button>
          </BrowserTools>
          <TreeBox>
            <Tree>
              {nodes.map((n, i) => <TreeRow key={n[0]} node={n} last={i === nodes.length - 1} />)}
              <Row $shade>
                <Branch $last><Toggle $open aria-label="Collapse Flat Pattern" /></Branch>
                <Icon name="flat" />
                <span>Flat Pattern</span>
              </Row>
              {flatNodes.map((n, i) => <TreeRow key={n[0]} node={n} last={i === 1} flat />)}
            </Tree>
            <ScrollTrack>
              <svg width="6" height="4" viewBox="0 0 6 4"><path d="M0 4h6L3 0z" fill="#444" /></svg>
              <ScrollThumb>
                <svg width="8" height="8" viewBox="0 0 8 8"><path d="M0 1.500h8M0 4.500h8M0 7.500h8" stroke="#666" /></svg>
              </ScrollThumb>
              <svg width="6" height="4" viewBox="0 0 6 4"><path d="M0 0h6L3 4z" fill="#444" /></svg>
            </ScrollTrack>
          </TreeBox>
        </Browser>

        <Viewport>
          <Model />
          <ViewButtons>
            <ViewButton aria-label="Minimize view">
              <svg width="12" height="12" viewBox="0 0 12 12"><path d="M1 9h10" stroke="#fff" strokeWidth="2.500" /></svg>
            </ViewButton>
            <ViewButton aria-label="Restore view">
              <svg width="12" height="12" viewBox="0 0 12 12"><path d="M4 1.500h7v7M2 4.500h6v6H2z" fill="none" stroke="#fff" strokeWidth="1.700" /></svg>
            </ViewButton>
            <ViewButton aria-label="Close view">
              <svg width="12" height="12" viewBox="0 0 12 12"><path d="M2 2l8 8M10 2l-8 8" stroke="#fff" strokeWidth="2.500" /></svg>
            </ViewButton>
          </ViewButtons>
          <CubeArt width="64" height="68" viewBox="1282 178 64 68" role="img" aria-label="View cube">
            <path d="M1286 195l28-13 29 16-28 15z" fill="#979797" />
            <path d="M1286 195l29 18v31l-27-18z" fill="#909090" />
            <path d="M1315 213l28-15-2 29-26 17z" fill="#858585" />
            <path d="M1286 195l29 18 28-15M1315 213v31" fill="none" stroke="#a8a8a8" />
            <path d="M1306 195l6 5M1310 199l3-5M1312 193l5 4M1314 191l5 4 3-3M1319 190l4 3M1298 213l5 3v3l-5-3zM1298 219l5 3v3l-5-3zM1325 217v7M1329 215l3-2v6l-3 2zM1335 219v-7l3-1v3l-3 1" fill="none" stroke="#5c5c5c" strokeWidth="1.200" />
          </CubeArt>
          <TriadArt width="44" height="62" viewBox="330 617 44 62" role="img" aria-label="Axis triad">
            <path d="M339.500 654v-16" stroke="#1ca01c" strokeWidth="1.500" />
            <path d="M334 640l5.500-11 5.500 11c-2 2-9 2-11 0z" fill="#128a1c" />
            <path d="M339 654l12-7" stroke="#7a1414" />
            <path d="M349 641l11 1-3 10-6-3z" fill="#b30d12" />
            <path d="M339 654l12 7" stroke="#111a77" />
            <path d="M353 657l8 10-12-2z" fill="#0a16c4" />
            <text x="361" y="643" fontFamily="Liberation Sans" fontSize="11" fill="#e8383c">X</text>
            <text x="361" y="673" fontFamily="Liberation Sans" fontSize="11" fill="#2a36d8">Z</text>
            <text x="336" y="626" fontFamily="Liberation Sans" fontSize="9" fill="#55c455">Y</text>
          </TriadArt>
        </Viewport>
      </Workspace>
      <StatusBar />
    </Page>
  );
}
